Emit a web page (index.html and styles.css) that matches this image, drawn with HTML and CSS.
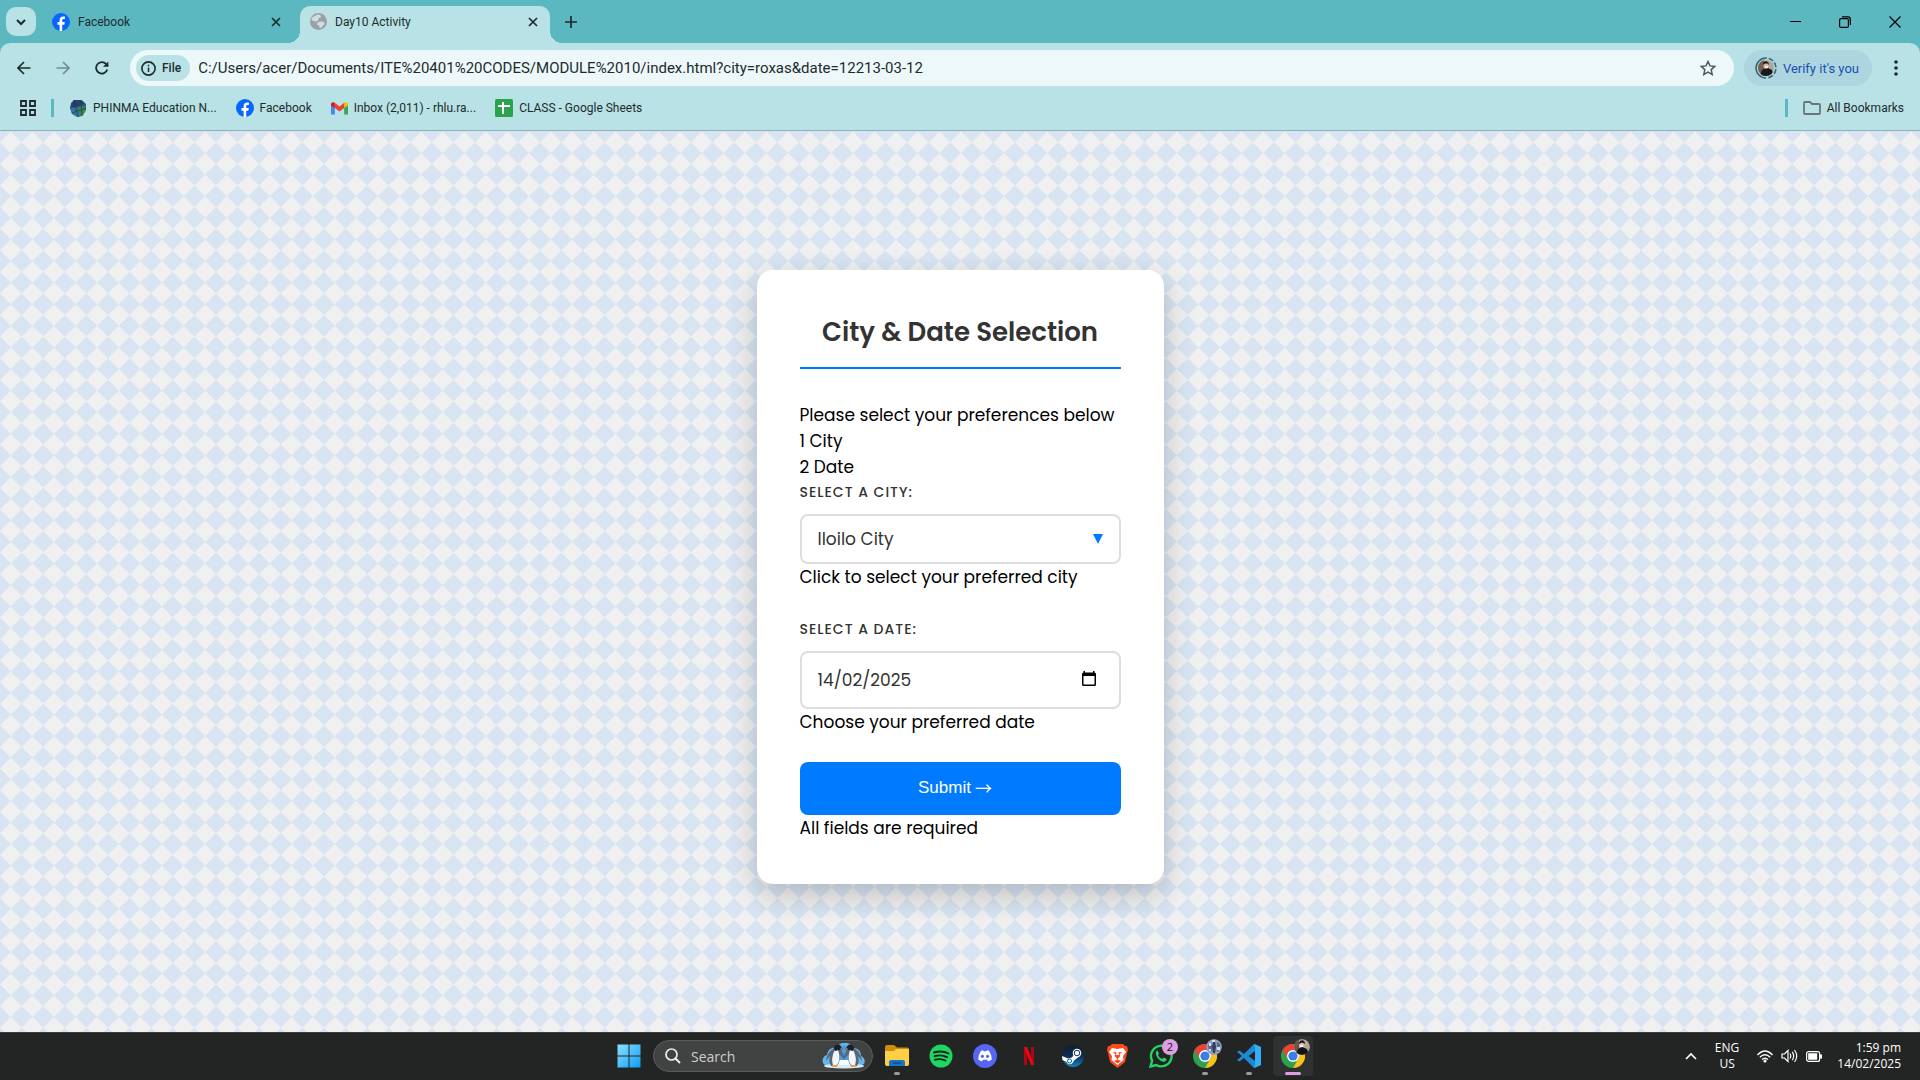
FILE: index.html
```html
<!DOCTYPE html>
<html lang="en-GB">
<head>
<meta charset="utf-8">
<meta name="viewport" content="width=device-width, initial-scale=1">
<title>Day10 Activity</title>
<link rel="stylesheet" href="styles.css">
</head>
<body>
<svg class="defs" aria-hidden="true">
  <symbol id="facebook" viewBox="0 0 18 18"><circle cx="9" cy="9" r="9" fill="#0866ff"/><path d="M7.6 18v-6.3H5.5V9h2.1V7.4c0-2.8 1.3-4 3.6-4 .7 0 1.3.1 1.7.2v2.3h-1.2c-1.1 0-1.5.5-1.5 1.5V9h2.6l-.5 2.7h-2.1V18z" fill="#fff"/></symbol>
  <symbol id="close" viewBox="0 0 10 10"><path d="M1 1l8 8M9 1L1 9" fill="none" stroke="currentColor" stroke-width="1.7"/></symbol>
  <symbol id="chrome" viewBox="0 0 24 24"><circle cx="12" cy="12" r="12" fill="#2fa14e"/><path d="M1.6 6A12 12 0 0 1 22.4 6H12a6 6 0 0 0-5.2 9z" fill="#ea4335"/><path d="M22.4 6A12 12 0 0 1 12 24l5.2-9A6 6 0 0 0 12 6z" fill="#fbc116"/><circle cx="12" cy="12" r="6" fill="#fff"/><circle cx="12" cy="12" r="4.6" fill="#3b7de9"/></symbol>
</svg>

<header class="browser">
  <div class="tabstrip">
    <button class="tab-search" aria-label="Search tabs"><svg width="10" height="8" viewBox="0 0 10 8"><path d="M1 2l4 4 4-4" fill="none" stroke="currentColor" stroke-width="2"/></svg></button>
    <div class="tab">
      <svg width="18" height="18"><use href="#facebook"/></svg>
      <span class="tab-title">Facebook</span>
      <button class="plain" aria-label="Close Facebook tab"><svg width="10" height="10"><use href="#close"/></svg></button>
    </div>
    <div class="tab active">
      <svg width="17" height="17" viewBox="0 0 17 17"><circle cx="8.500" cy="8.500" r="8.500" fill="#9aa0a6"/><path d="M7.500 1.500l3 .5.5 2-2.500 1.500L8 8l-3 .5-3.500-1.500.5-2.500zM10 8.500l4 .5.5 2-3 3.500-2 .5-.5-2.500-2-1 .5-2z" fill="#cfdfe1"/></svg>
      <span class="tab-title">Day10 Activity</span>
      <button class="plain" aria-label="Close Day10 Activity tab"><svg width="10" height="10"><use href="#close"/></svg></button>
    </div>
    <button class="plain new-tab" aria-label="New tab"><svg width="12" height="12" viewBox="0 0 12 12"><path d="M6 0v12M0 6h12" stroke="currentColor" stroke-width="1.700"/></svg></button>
    <div class="window-buttons">
      <button class="plain" aria-label="Minimise"><svg width="12" height="12" viewBox="0 0 12 12"><path d="M1 5.500h11" stroke="currentColor"/></svg></button>
      <button class="plain" aria-label="Restore"><svg width="12" height="12" viewBox="0 0 12 12"><g fill="none" stroke="currentColor" stroke-width="1.200"><rect x=".6" y="2.600" width="8.800" height="8.800" rx="1.500"/><path d="M3 .8h6a2.300 2.300 0 0 1 2.300 2.300v6"/></g></svg></button>
      <button class="plain" aria-label="Close"><svg width="12" height="12" viewBox="0 0 12 12"><path d="M.5.5l11 11M11.500.5l-11 11" stroke="currentColor" stroke-width="1.200"/></svg></button>
    </div>
  </div>

  <div class="chrome-body">
    <div class="toolbar">
      <nav class="history" aria-label="History">
        <button class="plain" aria-label="Back"><svg width="14" height="14" viewBox="0 0 14 14"><path d="M13.500 7H1.500M7 1L1 7l6 6" fill="none" stroke="currentColor" stroke-width="1.700"/></svg></button>
        <button class="plain faded" aria-label="Forward"><svg width="14" height="14" viewBox="0 0 14 14"><path d="M.5 7h12M7 1l6 6-6 6" fill="none" stroke="currentColor" stroke-width="1.700"/></svg></button>
        <button class="plain" aria-label="Reload"><svg width="14" height="14" viewBox="0 0 14 14"><path d="M12.300 8.500A5.700 5.700 0 1 1 11.200 3.200L13 5" fill="none" stroke="currentColor" stroke-width="1.800"/><path d="M13.300.5v5.300H8z" fill="currentColor"/></svg></button>
      </nav>
      <div class="omnibox">
        <button class="file-chip"><svg width="15" height="15" viewBox="0 0 15 15"><circle cx="7.500" cy="7.500" r="6.600" fill="none" stroke="currentColor" stroke-width="1.600"/><path d="M7.500 6.500v4.500M7.500 3.700v1.500" stroke="currentColor" stroke-width="1.500"/></svg>File</button>
        <input class="url" type="text" aria-label="Address" value="C:/Users/acer/Documents/ITE%20401%20CODES/MODULE%2010/index.html?city=roxas&amp;date=12213-03-12">
        <button class="plain star" aria-label="Bookmark this page"><svg width="16" height="16" viewBox="0 0 16 16"><path d="M8 1.500l2 4.400 4.800.5-3.600 3.200 1 4.800L8 12l-4.200 2.400 1-4.800L1.200 6.400 6 5.900z" fill="none" stroke="currentColor" stroke-width="1.500"/></svg></button>
      </div>
      <button class="profile"><svg width="22" height="22" viewBox="0 0 22 22"><circle cx="11" cy="11" r="10" fill="none" stroke="#35646f" stroke-width="1.500" stroke-dasharray="32 2 5 2 5 2 5 2 5 2.800" transform="rotate(90 11 11)"/><clipPath id="face"><circle cx="11" cy="11" r="8"/></clipPath><g clip-path="url(#face)"><path d="M3 3h16v16H3z" fill="#b1a69a"/><path d="M3 3h6v16H3z" fill="#765e50"/><path d="M5 19l2-6 3-2h3l4 2 2 6z" fill="#17191d"/><ellipse cx="11" cy="8.500" rx="2.600" ry="3.300" fill="#d9b59d"/><path d="M8 8c-.5-5 6-5 6 0l-1.500-1.500H10z" fill="#181818"/><path d="M10 9h3v2h-3z" fill="#eee"/></g></svg>Verify it's you</button>
      <button class="plain" aria-label="Menu"><svg width="4" height="16" viewBox="0 0 4 16"><g fill="currentColor"><circle cx="2" cy="2" r="1.800"/><circle cx="2" cy="8" r="1.800"/><circle cx="2" cy="14" r="1.800"/></g></svg></button>
    </div>

    <nav class="bookmarks" aria-label="Bookmarks">
      <button class="plain" aria-label="Apps"><svg width="16" height="16" viewBox="0 0 16 16"><path d="M1 1h5v5H1zM10 1h5v5h-5zM1 10h5v5H1zM10 10h5v5h-5z" fill="none" stroke="currentColor" stroke-width="1.800"/></svg></button>
      <span class="divider"></span>
      <a class="bookmark" href="#phinma"><svg width="18" height="18" viewBox="0 0 18 18"><path d="M5 1h7l5 4v6l-3 5-5 2-6-3-2-6 1-5z" fill="#2a5a78"/><path d="M5 1h7l3 2-6 4-7 1 1-4z" fill="#2b3e70"/><path d="M9 8l8-1-1 6-3 4-4 1z" fill="#3c8554"/><path d="M1 8l8 1 2 8-4 .5-4-3z" fill="#3b73a0"/><path d="M5 1l4 17M1 9l15-5M3 14l14-5M12 1l1 16" fill="none" stroke="#193b4c" stroke-width=".7"/></svg>PHINMA Education N...</a>
      <a class="bookmark" href="#facebook-page"><svg width="18" height="18"><use href="#facebook"/></svg>Facebook</a>
      <a class="bookmark" href="#inbox"><svg width="17" height="13" viewBox="0 0 17 13"><path d="M0 2v10.500h3.800V5z" fill="#4285f4"/><path d="M17 2v10.500h-3.800V5z" fill="#34a853"/><path d="M0 2.500C0 .2 2.200-.5 3.800.8V6L0 3.500z" fill="#c5221f"/><path d="M17 2.500C17 .2 14.800-.5 13.200.8V6L17 3.500z" fill="#fbbc04"/><path d="M3.800.8l4.700 3.600L13.200.8V6L8.500 9.500 3.800 6z" fill="#ea4335"/></svg>Inbox (2,011) - rhlu.ra...</a>
      <a class="bookmark" href="#class"><svg width="18" height="18" viewBox="0 0 18 18"><rect width="18" height="18" rx="1.500" fill="#2ba24c"/><path d="M8 3v12M3 7h12" stroke="#fff" stroke-width="2"/></svg>CLASS - Google Sheets</a>
      <span class="divider push"></span>
      <a class="bookmark" href="#all"><svg width="18" height="14" viewBox="0 0 18 14"><path d="M1 2q0-1 1-1h5l2 2h7q1 0 1 1v8q0 1-1 1H2q-1 0-1-1z" fill="none" stroke="#6d7577" stroke-width="1.800"/></svg>All Bookmarks</a>
    </nav>
  </div>
</header>

<main class="page">
  <form class="card">
    <h1>City &amp; Date Selection</h1>
    <p>Please select your preferences below</p>
    <p>1 City</p>
    <p>2 Date</p>
    <div class="field">
      <label for="city">Select a City:</label>
      <div class="control">
        <select id="city"><option>Iloilo City</option><option>Roxas City</option></select>
        <svg class="arrow" width="10" height="10" viewBox="0 0 10 10" aria-hidden="true"><path d="M0 0h10L5 10z" fill="#007bff"/></svg>
      </div>
      <p>Click to select your preferred city</p>
    </div>
    <div class="field">
      <label for="date">Select a Date:</label>
      <div class="control">
        <input class="date" id="date" type="text" value="14/02/2025">
        <button class="plain calendar" type="button" aria-label="Open calendar"><svg width="14" height="16" viewBox="0 0 14 16"><path d="M1.500 0H3v1.500h8V0h1.500v1.500q1.500 0 1.500 1.500v10.500q0 1.500-1.500 1.500h-11Q0 15 0 13.500V3q0-1.500 1.500-1.500zM1.500 5v8.500h11V5z" fill="#000" fill-rule="evenodd"/></svg></button>
      </div>
      <p>Choose your preferred date</p>
    </div>
    <button class="submit" type="submit">Submit <span class="submit-arrow">→</span></button>
    <p>All fields are required</p>
  </form>
</main>

<footer class="taskbar">
  <div class="apps">
    <button class="app" aria-label="Start"><svg width="24" height="24" viewBox="0 0 24 24"><defs><linearGradient id="win" x1="0" y1="0" x2="1" y2="1"><stop stop-color="#8be2ff"/><stop offset="1" stop-color="#0c9bf5"/></linearGradient></defs><path d="M.5.5h11v11H.5zM12.500.5h11v11h-11zM.5 12.500h11v11H.5zM12.500 12.500h11v11h-11z" fill="url(#win)"/></svg></button>
    <label class="search">
      <svg width="16" height="16" viewBox="0 0 16 16"><circle cx="6.500" cy="6.500" r="5.500" fill="none" stroke="#eee" stroke-width="1.700"/><path d="M10.500 10.500L15 15" stroke="#eee" stroke-width="1.900"/></svg>
      <input type="text" placeholder="Search" aria-label="Search">
      <svg width="44" height="26" viewBox="0 0 44 26"><path d="M3 22C-1 20 0 13 5 12 6 6 10 4 14 5c3-7 15-7 17 0 6 0 8 4 8 8 5 2 5 9 0 9z" fill="#65b6ec"/><path d="M17 4q6-4 11 1v12H17z" fill="#4a9de0"/><ellipse cx="22" cy="23" rx="20" ry="2.500" fill="#cfeef7"/><path d="M12 19h20v2H12z" fill="#d75c72"/><path d="M15 17h14v5H15z" fill="#f8fbff"/><path d="M15 2c3-1 5 1 4 4 1 4 3 6 4 9l-1 1-4-4c0 5-1 9-3 11H9c-2-3-2-7-1-10l-4 5c1-7 4-10 7-12z" fill="#56677c"/><path d="M16 7c2 5 2 11-1 15h-4c-2-5 0-12 2-15z" fill="#f3f6f8"/><path d="M12 5c0-4 6-5 7-1l2 2-4 1-4 1z" fill="#17202b"/><path d="M29 2c-3-1-5 1-4 4-1 4-3 6-4 9l1 1 4-4c0 5 1 9 3 11h6c2-3 2-7 1-10l4 5c-1-7-4-10-7-12z" fill="#56677c"/><path d="M28 7c-2 5-2 11 1 15h4c2-5 0-12-2-15z" fill="#f3f6f8"/><path d="M32 5c0-4-6-5-7-1l-2 2 4 1 4 1z" fill="#17202b"/><path d="M19 5l2 1-3 .5zM25 5l-2 1 3 .5zM10 22h5v2h-5zM29 22h5v2h-5z" fill="#f2a13a"/></svg>
    </label>
    <button class="app running" aria-label="File Explorer"><svg width="24" height="22" viewBox="0 0 24 22"><path d="M0 2q0-2 2-2h7l3 2.500h10q2 0 2 2V10H0z" fill="#d18b0d"/><path d="M0 6h9l2-2h13v15q0 2-2 2H2q-2 0-2-2z" fill="#ffcf48"/><path d="M4 21v-4q0-2 2-2h12q2 0 2 2v4z" fill="#1676c4"/><path d="M8 18h8" stroke="#0c4f91" stroke-width="1.500"/></svg></button>
    <button class="app" aria-label="Spotify"><svg width="24" height="24" viewBox="0 0 24 24"><circle cx="12" cy="12" r="11.500" fill="#1ed760"/><path d="M5 8.500q8-2.500 14.500 1M5.500 12.200q7-2 12.500 1M6 15.700q6-1.500 10.500.9" fill="none" stroke="#14231a" stroke-width="1.900" stroke-linecap="round"/></svg></button>
    <button class="app" aria-label="Discord"><svg width="24" height="24" viewBox="0 0 24 24"><circle cx="12" cy="12" r="12" fill="#5865f2"/><path d="M8 6.800l2-.5.700 1h2.600l.7-1 2 .5q2.700 4 2.800 8.700-1.800 1.400-3.800 1.800l-.9-1.500H9.900L9 17.300q-2-.4-3.800-1.800Q5.300 10.800 8 6.800z" fill="#fff"/><circle cx="9.400" cy="12.300" r="1.600" fill="#5865f2"/><circle cx="14.600" cy="12.300" r="1.600" fill="#5865f2"/></svg></button>
    <button class="app" aria-label="Netflix"><svg width="10" height="18" viewBox="0 0 10 18"><path d="M0 0h3v18H0zM7 0h3v18H7z" fill="#b1060f"/><path d="M0 0h3l7 18H7z" fill="#e50914"/></svg></button>
    <button class="app" aria-label="Steam"><svg width="24" height="24" viewBox="0 0 24 24"><defs><linearGradient id="steam" x1="0" y1="0" x2="0" y2="1"><stop stop-color="#111d2e"/><stop offset=".5" stop-color="#0c2c58"/><stop offset="1" stop-color="#1387c0"/></linearGradient></defs><circle cx="12" cy="12" r="11" fill="url(#steam)"/><path d="M1 12l6 2.500 4-1L14 9l5 3-5.500 4-2 3a3.500 3.500 0 0 1-6-1L1.500 16z" fill="#fff"/><circle cx="16" cy="9" r="4.300" fill="#fff"/><circle cx="16" cy="9" r="2.800" fill="#fff" stroke="#12315a"/><circle cx="8.500" cy="17" r="2" fill="none" stroke="#12517d"/></svg></button>
    <button class="app" aria-label="Brave"><svg width="21" height="24" viewBox="0 0 21 24"><path d="M5 0h11l2 2h2l1 4-1 3-2 9-7.500 6L3 18 1 9 0 6l1-4h2z" fill="#fb4b1d"/><path d="M5 4l5.500 1L16 4l3 4-3 4 .5 4-6 5-6-5L5 12 2 8z" fill="#fff"/><path d="M5.500 8.500l3 1.500-1 2 2 2 1 2 1-2 2-2-1-2 3-1.500-4-.5.5 3h-3l.5-3zM7 17l3.500-1.500L14 17l-3.500 2.500z" fill="#fb4b1d"/></svg></button>
    <button class="app" aria-label="WhatsApp, 2 unread"><svg width="24" height="24" viewBox="0 0 24 24"><path d="M1.500 22.500l1.600-5.800A10.300 10.300 0 1 1 7.200 21z" fill="none" stroke="#25d366" stroke-width="2.400"/><path d="M8.600 6.500c-1 .2-2 1.500-1.800 3 .5 4 4 7.500 7.500 8.300 1.800.2 3.400-1 3.300-2.700l-3-1.500-1.400 1.500c-2-.8-3.300-2-4.200-4l1-1.500z" fill="#25d366"/></svg><span class="badge count">2</span></button>
    <button class="app running" aria-label="Chrome, first profile"><svg width="24" height="24"><use href="#chrome"/></svg><svg class="badge" viewBox="0 0 16 16"><circle cx="8" cy="8" r="8" fill="#8b9cbf"/><path d="M2 6h4v6H3zM11 3l3 2v5l-3 3z" fill="#5b6486"/><path d="M7 3h2l1 5-1 6H7L6 8z" fill="#343c5a"/><path d="M3 4h2v3H3zM11 8h3v3h-3zM6 1h3v2H6zM3 10h2v2H3z" fill="#d8e0ef"/></svg></button>
    <button class="app running" aria-label="Visual Studio Code"><svg width="24" height="24" viewBox="0 0 24 24"><path d="M17 0l7 3v18l-7 3L7 14l-4.500 3.500L0 16l5-4-5-4 2.500-1.500L7 10zM18 7l-6.500 5 6.500 5z" fill="#1b8bd3" fill-rule="evenodd"/><path d="M17 0l7 3v18l-7 3 1-3V3z" fill="#35aef5"/></svg></button>
    <button class="app current" aria-label="Chrome, second profile"><svg width="24" height="24"><use href="#chrome"/></svg><svg class="badge" viewBox="0 0 16 16"><clipPath id="round"><circle cx="8" cy="8" r="8"/></clipPath><g clip-path="url(#round)"><path d="M0 0h16v16H0z" fill="#b4a89b"/><path d="M0 0h5v16H0z" fill="#6c5548"/><path d="M2 16l2-6 4-2 5 2 2 6z" fill="#111317"/><circle cx="8" cy="5.500" r="2.500" fill="#dfc1ab"/><path d="M5 5c0-5 6-5 6 0L8 3.500z" fill="#1a1817"/><path d="M6 6h3v2H6z" fill="#fff"/></g></svg></button>
  </div>
  <div class="tray">
    <button class="plain" aria-label="Show hidden icons"><svg width="12" height="8" viewBox="0 0 12 8"><path d="M1 7l5-5 5 5" fill="none" stroke="currentColor" stroke-width="1.700"/></svg></button>
    <div class="language">ENG<br>US</div>
    <div class="status">
      <svg width="16" height="13" viewBox="0 0 16 13"><g fill="none" stroke="currentColor" stroke-width="1.300"><path d="M.5 5Q8-3 15.500 5M2.800 7.300q5.200-5 10.400 0M5 9.600q3-2.700 6 0"/></g><circle cx="8" cy="11" r="1.600" fill="currentColor"/></svg>
      <svg width="17" height="14" viewBox="0 0 17 14"><g fill="none" stroke="currentColor" stroke-width="1.200"><path d="M1 5h2.500L7 1.500v11L3.500 9H1zM9 4.500q1.500 2.500 0 5M11.300 2.800q2.800 4.200 0 8.400M13.500 1q4.500 6 0 12"/></g></svg>
      <svg width="16" height="11" viewBox="0 0 16 11"><rect x=".6" y=".6" width="13" height="9.800" rx="2" fill="none" stroke="currentColor" stroke-width="1.200"/><path d="M2.200 2.200h9v6.600h-9zM14 3.500h2v4h-2z" fill="currentColor"/></svg>
    </div>
    <div class="clock">1:59 pm<br>14/02/2025</div>
  </div>
</footer>
</body>
</html>
```
FILE: styles.css
```css
* {
  box-sizing: border-box;
}

body {
  margin: 0;
  min-height: 100vh;
  display: flex;
  flex-direction: column;
  font-family: "Segoe UI", "Open Sans", "Noto Sans", sans-serif;
  font-size: 12px;
  color: #1d2b2d;
}

button,
input,
select {
  font: inherit;
  color: inherit;
}

button {
  display: flex;
  align-items: center;
  border: 0;
}

svg {
  display: block;
  flex: none;
}

p {
  margin: 0;
}

.defs {
  position: absolute;
  width: 0;
  height: 0;
}

.plain {
  padding: 0;
  background: none;
}

/* Browser window */
.browser {
  background: #5bb8c1;
  font-family: "Segoe UI", Roboto, sans-serif;
}

.tabstrip {
  display: flex;
  align-items: center;
  height: 43px;
  padding-left: 6px;
}

.tab-search {
  width: 30px;
  height: 29px;
  justify-content: center;
  padding: 0;
  border-radius: 10px;
  background: #b8e2e5;
}

.tab {
  display: flex;
  align-items: center;
  gap: 8px;
  width: 248px;
  padding: 0 3px 0 16px;
}

.tab-title {
  flex: 1;
}

.active {
  position: relative;
  align-self: flex-end;
  width: 250px;
  height: 37px;
  margin-left: 16px;
  padding: 0 12px 6px 10px;
  border-radius: 10px 10px 0 0;
  background: #b8e2e5;
}

.active::before,
.active::after {
  content: "";
  position: absolute;
  bottom: 0;
  width: 12px;
  height: 12px;
}

.active::before {
  right: 100%;
  background: radial-gradient(circle at 0 0, transparent 12px, #b8e2e5 12px);
}

.active::after {
  left: 100%;
  background: radial-gradient(circle at 100% 0, transparent 12px, #b8e2e5 12px);
}

.new-tab {
  margin-left: 15px;
}

.window-buttons {
  display: flex;
  gap: 38px;
  margin-left: auto;
  padding-right: 19px;
  color: #000;
}

.chrome-body {
  border-bottom: 1px solid #8cb1b9;
  border-radius: 10px 10px 0 0;
  background: #b8e2e5;
}

.toolbar {
  display: flex;
  align-items: center;
  gap: 10px;
  padding: 7px 22px 0 17px;
}

.history {
  display: flex;
  gap: 25px;
  margin-right: 11px;
}

.faded {
  opacity: .45;
}

.omnibox {
  display: flex;
  flex: 1;
  align-items: center;
  height: 36px;
  padding: 0 18px 0 6px;
  border-radius: 18px;
  background: #ecf8f9;
}

.file-chip {
  gap: 6px;
  height: 26px;
  padding: 0 9px 0 5px;
  border-radius: 13px;
  background: #b8e2e5;
  font-weight: 500;
}

.url {
  flex: 1;
  padding: 0 8px;
  border: 0;
  background: none;
  font-size: 15px;
}

.star {
  color: #4d5a5c;
}

.profile {
  gap: 6px;
  height: 36px;
  padding: 0 13px 0 11px;
  margin-right: 12px;
  border-radius: 18px;
  background: #acd5df;
  color: #1a4fae;
  font-size: 13px;
}

.bookmarks {
  display: flex;
  align-items: center;
  gap: 19px;
  height: 44px;
  padding: 0 16px 0 20px;
}

.bookmark {
  display: flex;
  align-items: center;
  gap: 6px;
  color: inherit;
  text-decoration: none;
}

.divider {
  width: 3px;
  height: 18px;
  margin: 0 -4px;
  background: #5bb8c1;
}

.push {
  margin-left: auto;
}

/* Web page */
.page {
  flex: 1;
  display: flex;
  align-items: center;
  justify-content: center;
  padding: 20px 20px 30px;
  background-color: #f0f0f0;
  background-image:
    linear-gradient(45deg, rgba(0, 123, 255, .1) 25%, transparent 25%, transparent 75%, rgba(0, 123, 255, .1) 75%),
    linear-gradient(-45deg, rgba(0, 123, 255, .1) 25%, transparent 25%, transparent 75%, rgba(0, 123, 255, .1) 75%);
  background-size: 1.125vw 1.125vw;
  font-family: Poppins, Inter, sans-serif;
  font-size: 17px;
  line-height: 26px;
  color: #000;
}

.card {
  width: 100%;
  max-width: 407px;
  padding: 43px;
  border-radius: 16px;
  background: #fff;
  box-shadow: 0 11px 32px rgba(0, 0, 0, .2);
}

.card h1 {
  margin: 0 0 33px;
  padding-bottom: 15px;
  border-bottom: 2px solid #007bff;
  color: #333;
  font-size: 26px;
  font-weight: 600;
  line-height: 39px;
  text-align: center;
}

.field {
  margin-bottom: 27px;
}

.field label {
  display: block;
  margin-bottom: 10px;
  color: #333;
  font-size: 14px;
  font-weight: 500;
  line-height: 24px;
  letter-spacing: 1px;
  text-transform: uppercase;
}

.control {
  position: relative;
}

.control select,
.date {
  display: block;
  width: 100%;
  height: 50px;
  padding: 0 16px;
  border: 2px solid #ddd;
  border-radius: 8px;
  appearance: none;
  background: #fff;
  color: #333;
}

.date {
  height: 58px;
}

.arrow {
  position: absolute;
  top: 20px;
  right: 18px;
  pointer-events: none;
}

.calendar {
  position: absolute;
  top: 20px;
  right: 25px;
}

.submit {
  justify-content: center;
  gap: 4px;
  width: 100%;
  height: 53px;
  padding: 0 16px 0 6px;
  border-radius: 8px;
  background: #007bff;
  color: #fff;
  font-family: Arial, "Liberation Sans", sans-serif;
}

.submit-arrow {
  font-family: "Noto Sans CJK JP", sans-serif;
}

/* Taskbar */
.taskbar {
  display: grid;
  grid-template-columns: 1fr auto 1fr;
  align-items: center;
  height: 48px;
  background: #232424;
  box-shadow: inset 0 1px #3d3f40;
  color: #fff;
}

.apps {
  display: flex;
  grid-column: 2;
  align-items: center;
  gap: 4px;
  padding-left: 2px;
}

.app {
  position: relative;
  justify-content: center;
  width: 40px;
  height: 40px;
  padding: 0;
  border-radius: 4px;
  background: none;
}

.current {
  background: #303131;
}

.running::after,
.current::after {
  content: "";
  position: absolute;
  bottom: 1px;
  left: 17px;
  width: 6px;
  height: 3px;
  border-radius: 2px;
  background: #9a9b9b;
}

.current::after {
  left: 12px;
  width: 16px;
  background: #dc9fe3;
}

.badge {
  position: absolute;
  top: 3px;
  right: 3px;
  width: 16px;
  height: 16px;
  border-radius: 8px;
}

.count {
  background: #dc9fe3;
  color: #111;
  font-size: 11px;
  line-height: 16px;
}

.search {
  display: flex;
  align-items: center;
  gap: 10px;
  width: 220px;
  height: 32px;
  padding: 0 6px 0 11px;
  border: 1px solid #5a5b5b;
  border-radius: 16px;
  background: #414242;
}

.search input {
  flex: 1;
  min-width: 0;
  padding: 0;
  border: 0;
  background: none;
  font-size: 14px;
}

.search input::placeholder {
  color: #cfcfcf;
}

.tray {
  display: flex;
  align-items: center;
  justify-self: end;
  gap: 15px;
  padding-right: 19px;
  line-height: 16px;
  text-align: center;
}

.language {
  padding: 0 3px;
}

.status {
  display: flex;
  align-items: center;
  gap: 8px;
}

.clock {
  text-align: right;
}
```
